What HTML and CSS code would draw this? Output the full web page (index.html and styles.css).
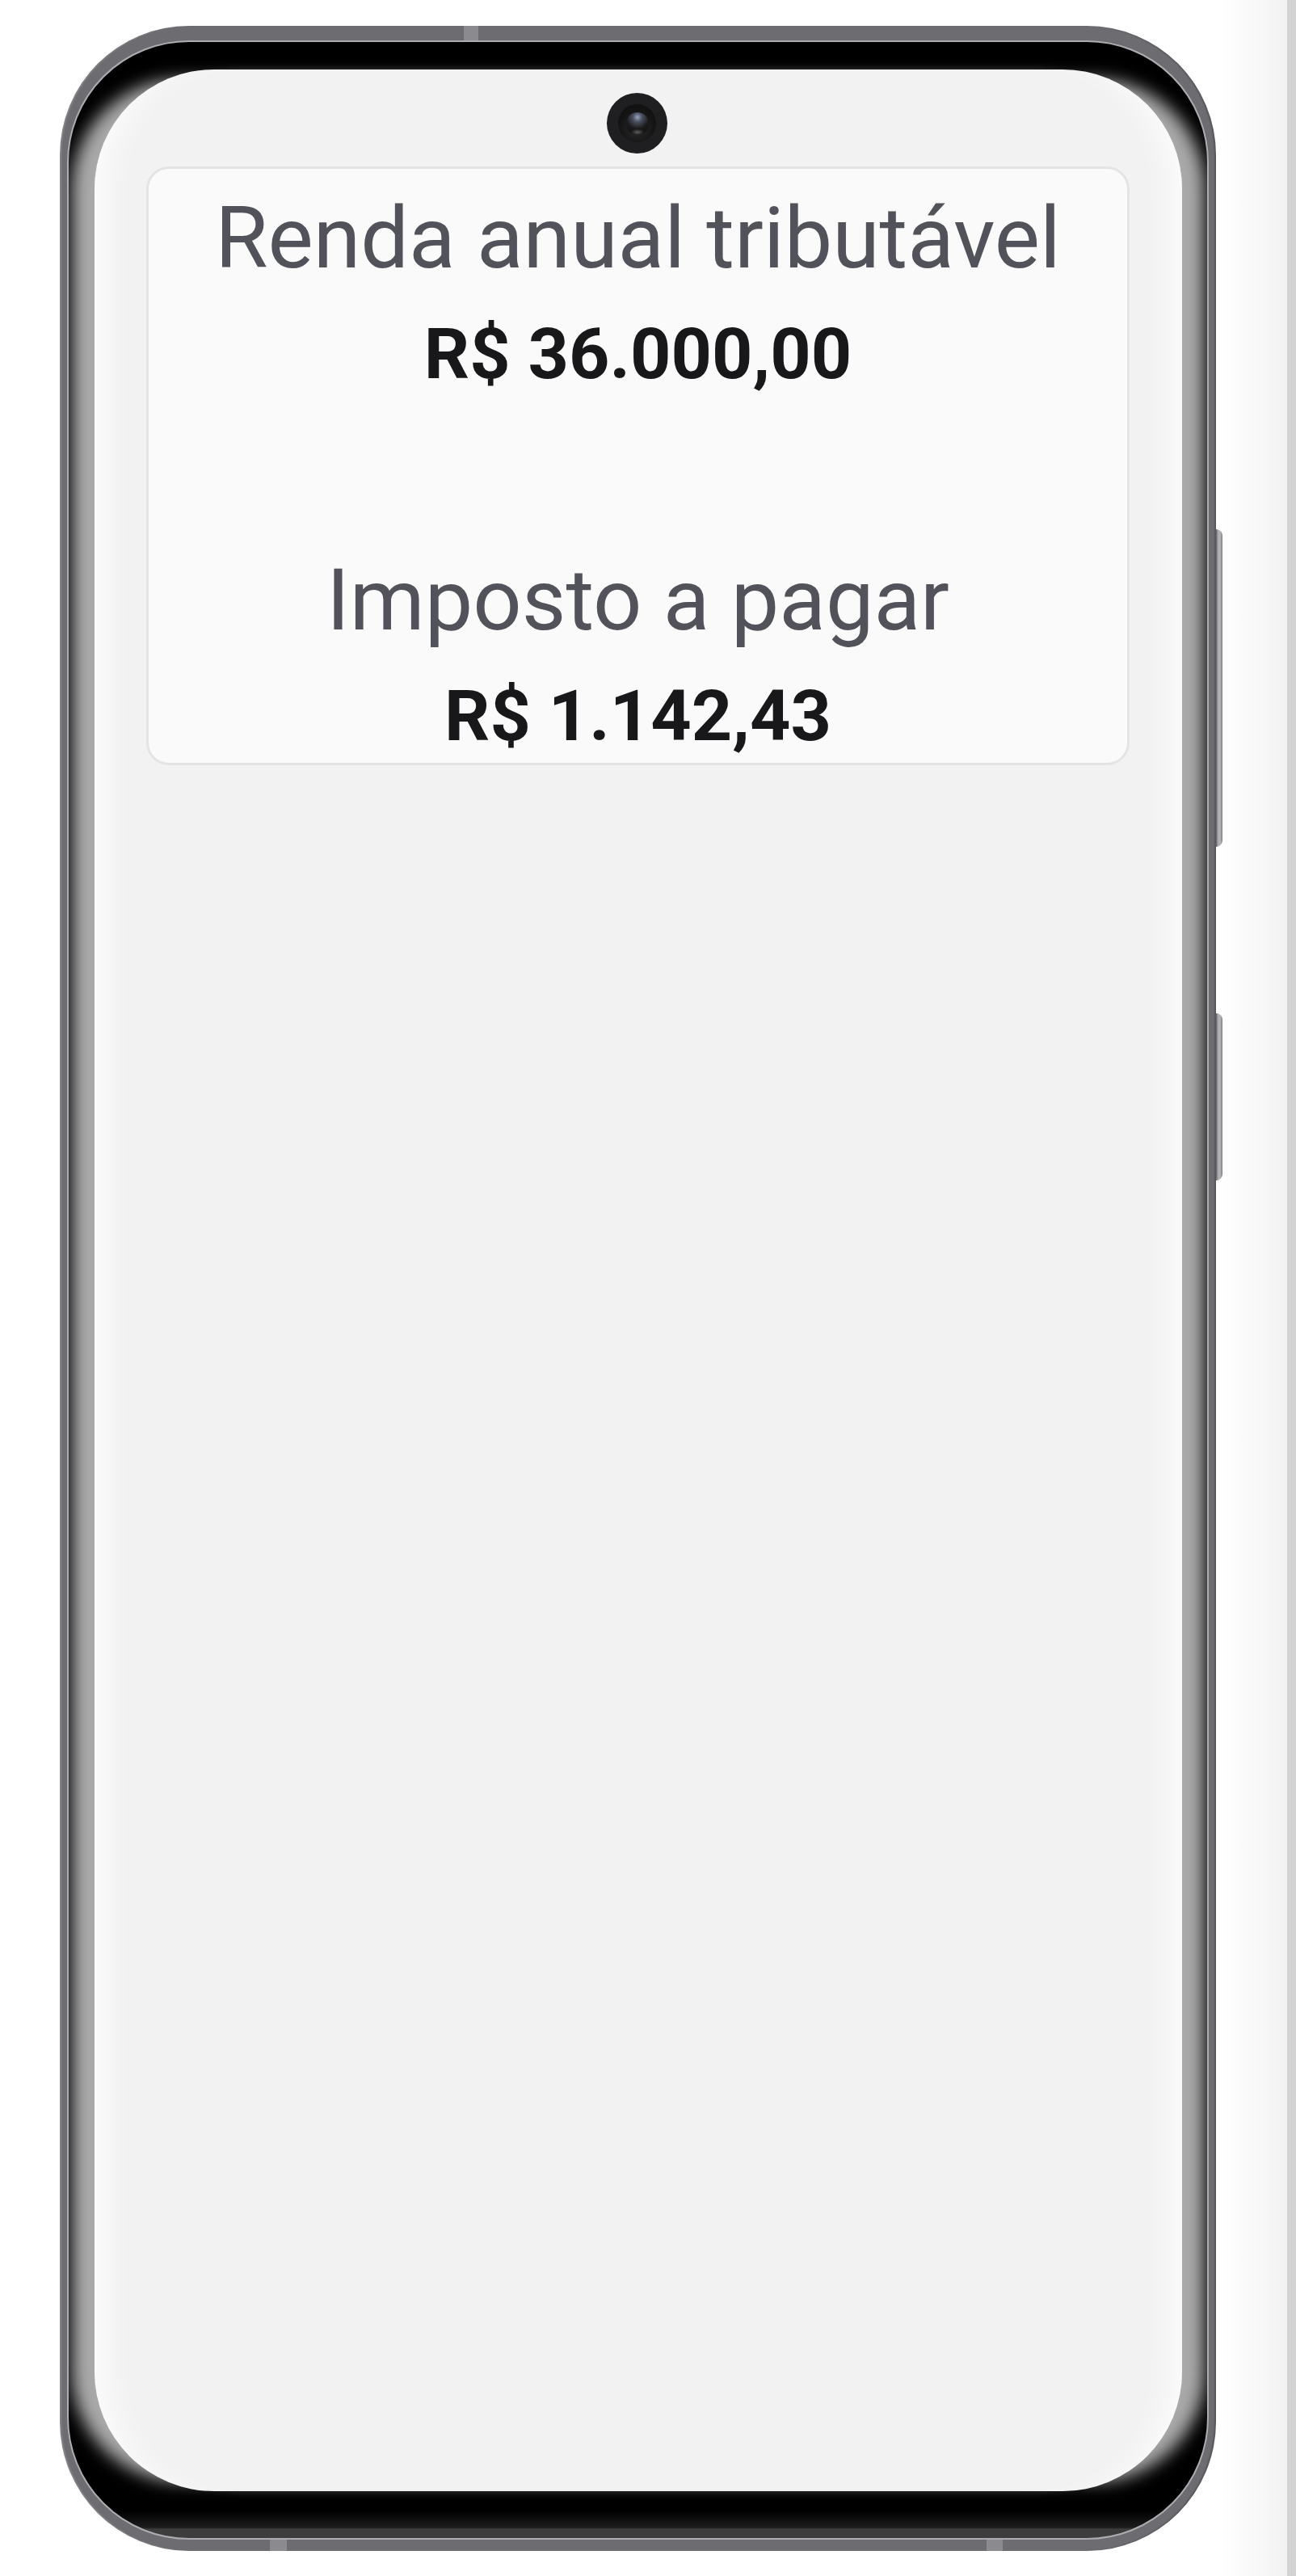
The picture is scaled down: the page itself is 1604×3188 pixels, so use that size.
FILE: index.html
```html
<!DOCTYPE html>
<html lang="pt-BR">
<head>
<meta charset="utf-8">
<title>Imposto de renda</title>
<link rel="stylesheet" href="styles.css">
</head>
<body>
  <div class="stage">
    <div class="phone">
      <span class="tick tick-top"></span>
      <span class="tick tick-b1"></span>
      <span class="tick tick-b2"></span>
      <span class="btn btn-1"></span>
      <span class="btn btn-2"></span>
      <div class="bezel">
        <div class="screen">
          <div class="camera"><div class="cam-ring"><div class="cam-lens"></div></div></div>
          <div class="card">
            <div class="item">
              <div class="label">Renda anual tributável</div>
              <div class="value">R$ 36.000,00</div>
            </div>
            <div class="item">
              <div class="label">Imposto a pagar</div>
              <div class="value">R$ 1.142,43</div>
            </div>
          </div>
        </div>
      </div>
    </div>
  </div>
  <div class="edge"></div>
</body>
</html>
```

FILE: styles.css
```css
html, body {
  margin: 0;
  height: 3188px;
}

body {
  display: flex;
  background: #fff;
  overflow: hidden;
  font-family: Roboto, "Liberation Sans", sans-serif;
}

.stage {
  flex: 1;
  padding: 32px 0 0 74px;
  background: linear-gradient(to right, #fff 0, #fff 1510px, #f2f2f2 100%);
}

.edge {
  width: 11px;
  background: #d3d3d3;
}

.phone {
  position: relative;
  width: 1431px;
  height: 3125px;
  box-sizing: border-box;
  padding: 18px 9px 14px;
  border-radius: 160px;
  background: #6c6c71;
  box-shadow: inset 2px 0 2px rgba(255, 255, 255, 0.18), inset -2px 0 2px rgba(0, 0, 0, 0.2);
}

.tick {
  position: absolute;
  background: #8b8b8f;
}

.tick-top {
  left: 500px;
  top: 0;
  width: 18px;
  height: 18px;
}

.tick-b1 {
  left: 260px;
  bottom: 0;
  width: 21px;
  height: 14px;
}

.tick-b2 {
  left: 1147px;
  bottom: 0;
  width: 20px;
  height: 14px;
}

.btn {
  position: absolute;
  left: 100%;
  width: 8px;
  border-radius: 0 8px 8px 0;
  background: linear-gradient(to right, #5c5c60 0, #a9a9ac 30%, #b6b6b9 65%, #7a7a7e 100%);
}

.btn-1 {
  top: 623px;
  height: 393px;
}

.btn-2 {
  top: 1222px;
  height: 207px;
}

.bezel {
  height: 100%;
  box-sizing: border-box;
  border: 2px solid #adadb1;
  border-radius: 151px;
  background: linear-gradient(to top, #3d3d3d 0, #3d3d3d 11px, #1c1c1c 13px, #000 34px);
  padding: 34px 31px 58px 32px;
  overflow: hidden;
}

.screen {
  position: relative;
  height: 100%;
  box-sizing: border-box;
  border-radius: 148px;
  background: #f2f2f2;
  padding-top: 120px;
  box-shadow:
    -40px 0 20px -12px #a9a9a9,
    40px 0 20px -12px #a9a9a9,
    inset 40px 0 40px -30px rgba(255, 255, 255, 0.9),
    inset -40px 0 40px -30px rgba(255, 255, 255, 0.9);
}

.camera {
  position: absolute;
  top: 29px;
  left: 50%;
  margin-left: -39px;
  width: 75px;
  height: 75px;
  border-radius: 50%;
  background: #1f1f21;
  display: flex;
  align-items: center;
  justify-content: center;
}

.cam-ring {
  width: 47px;
  height: 47px;
  border-radius: 50%;
  background: radial-gradient(circle at 50% 62%, #2c2c2c 0, #151515 55%, #0c0c0c 100%);
  display: flex;
  align-items: center;
  justify-content: center;
}

.cam-lens {
  width: 28px;
  height: 28px;
  border-radius: 50%;
  background:
    radial-gradient(ellipse 8px 4px at 50% 88%, rgba(110, 110, 110, 0.8), rgba(110, 110, 110, 0) 100%),
    radial-gradient(circle at 50% 22%, #95a6c2 0, #4a5160 22%, #1a1a1a 55%, #101010 100%);
}

.card {
  margin: 0 65px 0 64px;
  border: 3px solid #e4e4e7;
  border-radius: 28px;
  background: #fafafa;
  padding: 24px 0 7px;
  text-align: center;
  display: flex;
  flex-direction: column;
  gap: 192px;
}

.item {
  display: flex;
  flex-direction: column;
  gap: 29px;
}

.label {
  font-family: Roboto, "Liberation Sans", sans-serif;
  font-weight: 400;
  font-size: 106px;
  line-height: 124px;
  color: #52525b;
  white-space: nowrap;
}

.value {
  font-family: Roboto, "Liberation Sans", sans-serif;
  font-weight: 700;
  font-size: 88px;
  line-height: 103px;
  color: #18181b;
  white-space: nowrap;
}
```
